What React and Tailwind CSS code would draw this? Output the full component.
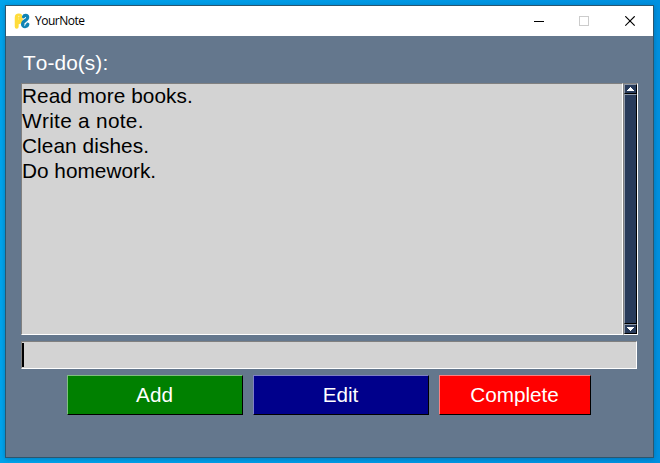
import React from "react";

const TODOS = [
  { text: "Read more books.", tracking: "tracking-[0.05px]" },
  { text: "Write a note.", tracking: "tracking-[0.3px]" },
  { text: "Clean dishes.", tracking: "tracking-[0.08px]" },
  { text: "Do homework.", tracking: "tracking-normal" },
];

function SnakeLogo() {
  return (
    <svg width="16" height="16" viewBox="0 0 16 16" className="shrink-0">
      <path d="M2.7 13.8V4.6C2.7 3 3.6 2.4 4.8 2.4C6.2 2.4 6.8 3.2 6.8 4.8V7C6.8 8.6 6 9.2 4.4 9.4" fill="none" stroke="#ffdc3a" strokeWidth="3.9" strokeLinecap="round" />
      <path d="M9.6 3.8C10 2.7 10.7 2.4 11.6 2.4C13.2 2.4 13.8 3.4 13.6 4.9C13.4 6.4 12.4 7 11 7.8C9.4 8.7 8.6 9.6 8.6 11.3C8.6 12.9 9.7 13.6 11.1 13.5C12.4 13.4 13.4 12.6 13.8 11.3" fill="none" stroke="#1184b4" strokeWidth="3.3" strokeLinecap="round" />
      <path d="M4.3 3.4h1M10.2 12.6h1" stroke="#fff" strokeWidth="0.8" />
    </svg>
  );
}

function TitleBar() {
  return (
    <div className="flex h-[30px] items-center bg-white pl-2">
      <SnakeLogo />
      <span className="ml-[5px] font-['Open_Sans','Noto_Sans',sans-serif] text-[12px] leading-[16px] tracking-[-0.5px] text-black">YourNote</span>
      <div className="ml-auto flex h-full">
        {["min", "max", "close"].map((kind) => (
          <div key={kind} className="flex w-[45.5px] items-center justify-center">
            <svg width="11" height="11" viewBox="0 0 11 11" shapeRendering={kind === "close" ? "auto" : "crispEdges"}>
              {kind === "min" && <path d="M0 5.5H10" stroke="#000" />}
              {kind === "max" && <rect x="0.5" y="0.5" width="9" height="9" fill="none" stroke="#ccc" />}
              {kind === "close" && <path d="M0.3 0.3L9.7 9.7M9.7 0.3L0.3 9.7" stroke="#000" strokeWidth="1.2" />}
            </svg>
          </div>
        ))}
      </div>
    </div>
  );
}

function ArrowButton({ down }) {
  return (
    <div className="flex h-[10px] items-center justify-center border border-t-[#8f99a8] border-r-black border-b-black border-l-[#8f99a8] bg-[#283b5b]">
      <svg width="7" height="4" viewBox="0 0 7 4" shapeRendering="crispEdges" className={down ? "rotate-180" : ""}>
        <path d="M3 0h1v1h1v1h1v1h1v1H0V3h1V2h1V1h1z" fill="#fff" />
      </svg>
    </div>
  );
}

function PushButton({ label, className }) {
  return (
    <button className={"h-10 border border-r-black border-b-black pr-px text-center text-[20.7px] leading-[38px] text-white " + className}>
      {label}
    </button>
  );
}

export default function App() {
  return (
    <div className="h-[463px] w-[660px] overflow-hidden bg-linear-to-r from-[#00a4ec] to-[#0091e0] pt-[5px] pl-[5px] font-['Liberation_Sans',Arial,sans-serif] [font-kerning:none]">
      <div className="flex h-[453px] w-[649px] flex-col border border-[#2b566f] bg-[#64778d] shadow-[0_1px_5px_rgba(0,40,80,0.3)]">
        <TitleBar />
        <div className="pt-[14px] pl-[15px]">
          <div className="h-[33px] pl-[2px] text-[20.8px] leading-[26px] tracking-[0.1px] text-white">To-do(s):</div>
          <div className="flex h-[252px]">
            <ul className="w-[602px] border border-t-[#808080] border-r-white border-b-white border-l-[#808080] bg-[#d3d3d3] text-[20.8px] leading-[25px] text-black">
              {TODOS.map(({ text, tracking }) => (
                <li key={text} className={"first:-mt-px " + tracking}>{text}</li>
              ))}
            </ul>
            <div className="flex w-[15px] flex-col border border-t-[#808080] border-r-white border-b-white border-l-[#808080]">
              <ArrowButton />
              <div className="flex-1 border border-t-[#8f99a8] border-r-black border-b-black border-l-[#8f99a8] bg-[#283b5b]" />
              <ArrowButton down />
            </div>
          </div>
          <div className="mt-[6px] h-7 w-[616px] border border-t-[#808080] border-r-white border-b-white border-l-[#808080] bg-[#d3d3d3] pt-px">
            <div className="h-6 w-0.5 bg-black" />
          </div>
          <div className="mt-[6px] flex gap-[10px] pl-[46px]">
            <PushButton label="Add" className="w-[176px] border-t-[#7fbf7f] border-l-[#7fbf7f] bg-[#008000]" />
            <PushButton label="Edit" className="w-[176px] border-t-[#7f7fc5] border-l-[#7f7fc5] bg-[#00008b]" />
            <PushButton label="Complete" className="w-[152px] border-t-[#ff7f7f] border-l-[#ff7f7f] bg-[#ff0000]" />
          </div>
        </div>
      </div>
    </div>
  );
}
